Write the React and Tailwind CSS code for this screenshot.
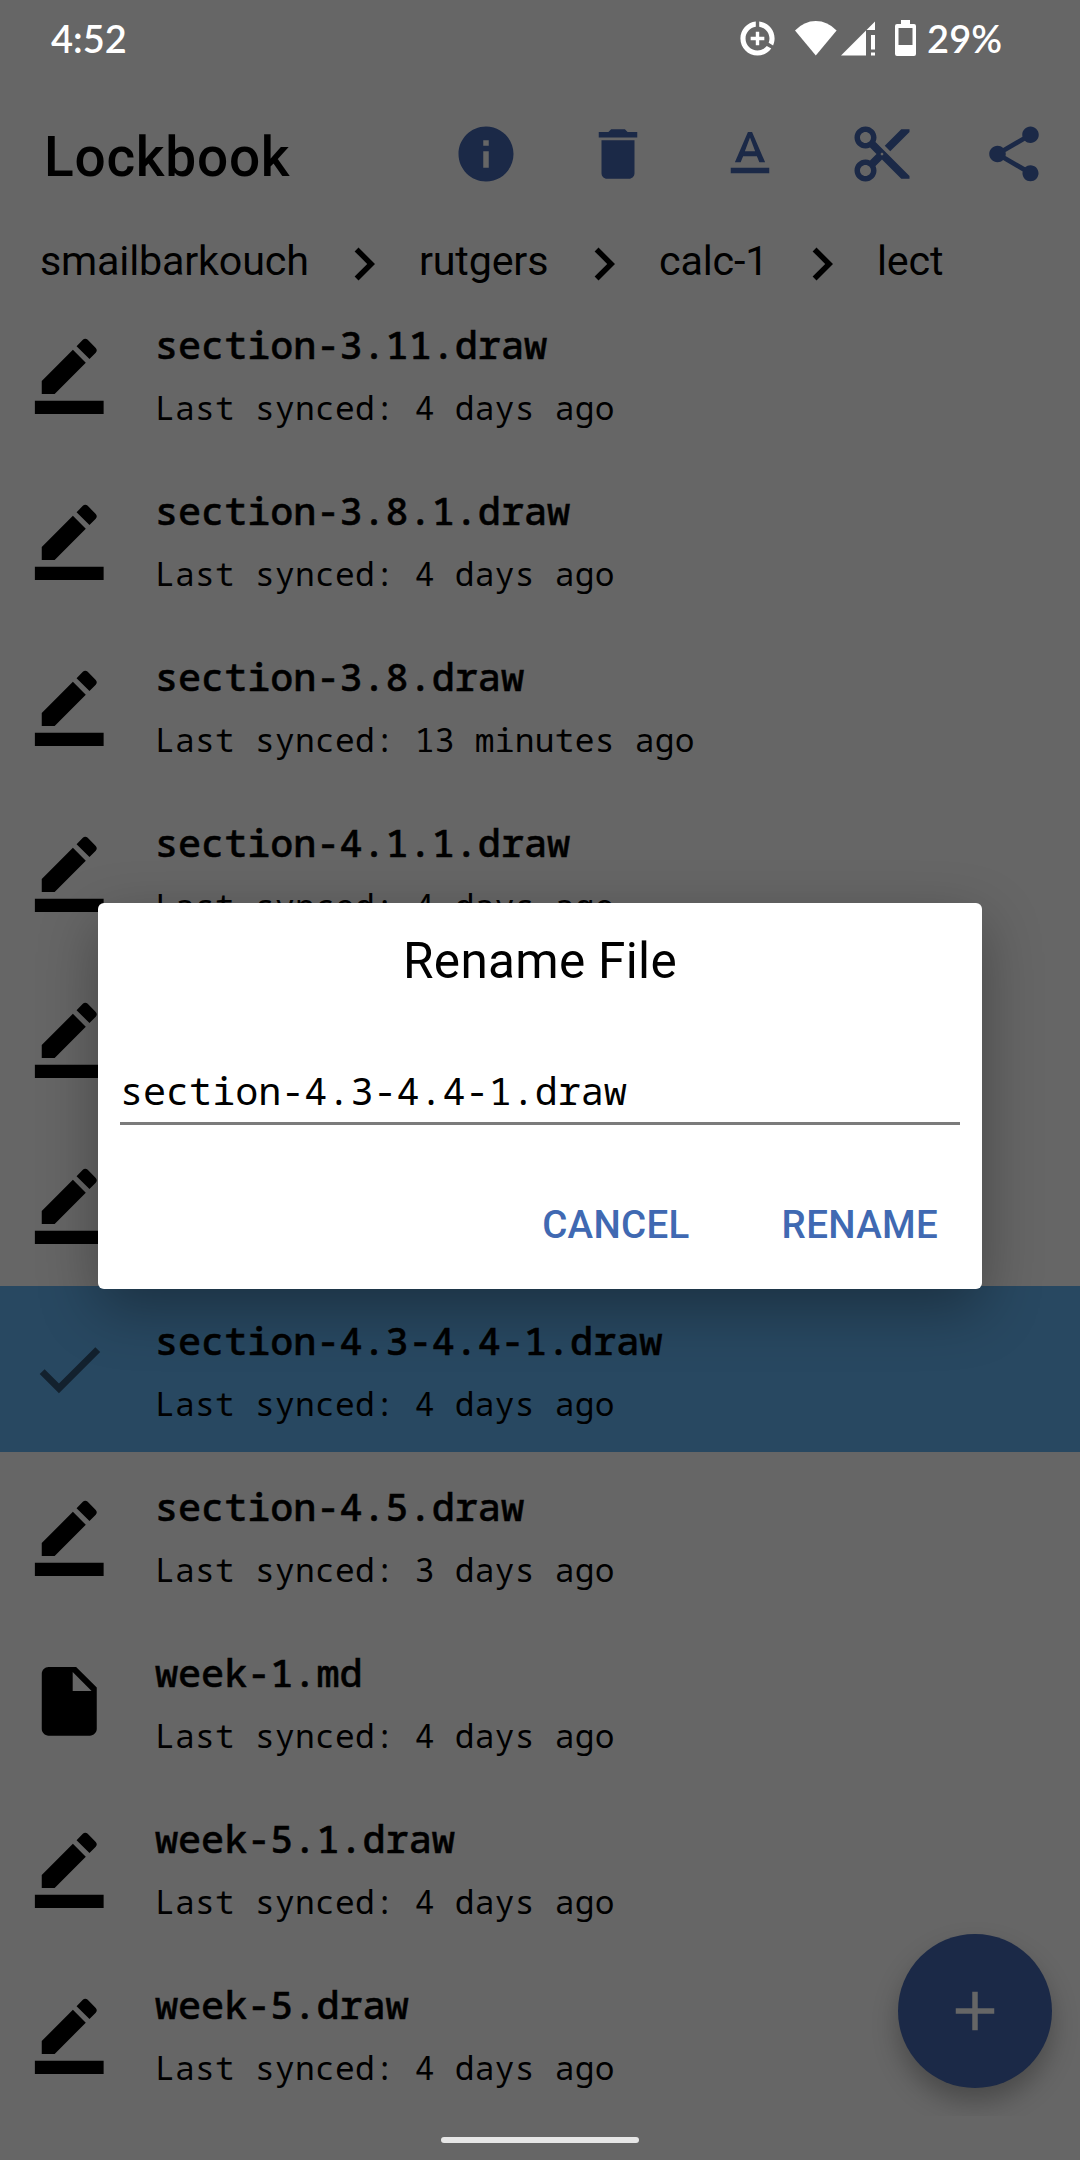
const ICONS = {
  info: "M12 2C6.48 2 2 6.48 2 12s4.48 10 10 10 10-4.48 10-10S17.52 2 12 2zm1 15h-2v-6h2v6zm0-8h-2V7h2v2z",
  trash: "M6 19c0 1.1.9 2 2 2h8c1.1 0 2-.9 2-2V7H6v12zM19 4h-3.5l-1-1h-5l-1 1H5v2h14V4z",
  format: "M5 17v2h14v-2H5zm4.5-4.2h5l.9 2.2h2.1L12.75 4h-1.5L6.5 15h2.1l.9-2.2zM12 5.98L13.87 11h-3.74L12 5.98z",
  cut: "M9.64 7.64c.23-.5.36-1.05.36-1.64 0-2.21-1.79-4-4-4S2 3.79 2 6s1.79 4 4 4c.59 0 1.14-.13 1.64-.36L10 12l-2.36 2.36C7.14 14.13 6.59 14 6 14c-2.21 0-4 1.79-4 4s1.79 4 4 4 4-1.79 4-4c0-.59-.13-1.14-.36-1.64L12 14l7 7h3v-1L9.64 7.64zM6 8c-1.1 0-2-.89-2-2s.9-2 2-2 2 .89 2 2-.9 2-2 2zm0 12c-1.1 0-2-.89-2-2s.9-2 2-2 2 .89 2 2-.9 2-2 2zm6-7.5c-.28 0-.5-.22-.5-.5s.22-.5.5-.5.5.22.5.5-.22.5-.5.5zM19 3l-6 6 2 2 7-7V3z",
  share: "M18 16.08c-.76 0-1.44.3-1.96.77L8.91 12.7c.05-.23.09-.46.09-.7s-.04-.47-.09-.7l7.05-4.11c.54.5 1.25.81 2.04.81 1.66 0 3-1.34 3-3s-1.34-3-3-3-3 1.34-3 3c0 .24.04.47.09.7L8.04 9.81C7.5 9.31 6.79 9 6 9c-1.66 0-3 1.34-3 3s1.34 3 3 3c.79 0 1.5-.31 2.04-.81l7.12 4.16c-.05.21-.08.43-.08.65 0 1.61 1.31 2.92 2.92 2.92 1.61 0 2.92-1.31 2.92-2.92s-1.31-2.92-2.92-2.92z",
  chevron: "M10 6L8.59 7.41 13.17 12l-4.58 4.59L10 18l6-6z",
  draw: "M22 24H2v-4h20v4zM13.06 5.19l3.75 3.75L7.75 18H4v-3.75l9.06-9.06zm4.82 2.68l-3.75-3.75 1.83-1.83c.39-.39 1.02-.39 1.41 0l2.34 2.34c.39.39.39 1.02 0 1.41l-1.83 1.83z",
  file: "M6 2c-1.1 0-1.99.9-1.99 2L4 20c0 1.1.89 2 1.99 2H18c1.1 0 2-.9 2-2V8l-6-6H6zm7 7V3.5L18.5 9H13z",
  check: "M9 16.17L4.83 12l-1.42 1.41L9 19 21 7l-1.41-1.41z",
  add: "M19 13h-6v6h-2v-6H5v-2h6V5h2v6h6v2z",
  saver: "M11 8v3H8v2h3v3h2v-3h3v-2h-3V8h-2zm2-5.95v3.03c3.39.49 6 3.39 6 6.92 0 .9-.18 1.75-.48 2.54l2.6 1.53c.56-1.24.88-2.62.88-4.07 0-5.18-3.95-9.45-9-9.95zM12 19c-3.87 0-7-3.13-7-7 0-3.53 2.61-6.43 6-6.92V2.05c-5.06.5-9 4.76-9 9.95 0 5.52 4.47 10 9.99 10 3.31 0 6.24-1.61 8.06-4.09l-2.6-1.53C16.17 17.98 14.21 19 12 19z",
};

function Icon({ name, className }) {
  return (
    <svg viewBox="0 0 24 24" fill="currentColor" className={`shrink-0 ${className}`}>
      <path d={ICONS[name]} />
    </svg>
  );
}

const FILES = [
  { name: "section-3.11.draw", synced: "4 days ago", icon: "draw" },
  { name: "section-3.8.1.draw", synced: "4 days ago", icon: "draw" },
  { name: "section-3.8.draw", synced: "13 minutes ago", icon: "draw" },
  { name: "section-4.1.1.draw", synced: "4 days ago", icon: "draw" },
  { icon: "draw" },
  { icon: "draw" },
  { name: "section-4.3-4.4-1.draw", synced: "4 days ago", icon: "check", selected: true },
  { name: "section-4.5.draw", synced: "3 days ago", icon: "draw" },
  { name: "week-1.md", synced: "4 days ago", icon: "file" },
  { name: "week-5.1.draw", synced: "4 days ago", icon: "draw" },
  { name: "week-5.draw", synced: "4 days ago", icon: "draw" },
];

function StatusBar() {
  return (
    <div className="flex h-[76px] items-center pl-[51px] pr-[78px] text-white">
      <span className="font-['Lato',sans-serif] text-[38px] leading-[46px] font-semibold">4:52</span>
      <div className="ml-auto flex items-center">
        <Icon name="saver" className="mr-[17px] size-[41px]" />
        <svg width="42" height="35" viewBox="0 0 42 35" fill="currentColor" className="mr-[4px]">
          <path d="M0 9.5Q9 0 20.8 0T41.6 9.5L20.8 34.5z" />
        </svg>
        <svg width="34" height="35" viewBox="0 0 34 35" fill="currentColor" className="mr-[20px]">
          <path d="M0 34.5L25 9.5V34.5zM25.5 9L34 0.5V9zM30 14h4v14.5h-4zM30 31.5h4v3h-4z" />
        </svg>
        <svg width="21" height="36" viewBox="0 0 21 36" fill="currentColor" className="mr-[11px]">
          <path fillRule="evenodd" d="M6 0h9v4h4q2 0 2 2v28q0 2-2 2H2q-2 0-2-2V6q0-2 2-2h4zM3.5 8v17h14V8z" />
        </svg>
        <span className="font-['Lato',sans-serif] text-[38px] leading-[46px] font-semibold">29%</span>
      </div>
    </div>
  );
}

function Header() {
  return (
    <header className="flex h-[156px] items-center pr-[33px] pl-[44px]">
      <h1 className="mt-[6px] text-[55px] leading-[66px] font-medium tracking-[0.75px]">Lockbook</h1>
      <div className="ml-auto flex gap-[66px] text-[#1b2947]">
        {["info", "trash", "format", "cut", "share"].map((name) => (
          <Icon key={name} name={name} className="size-[66px]" />
        ))}
      </div>
    </header>
  );
}

function Breadcrumb() {
  return (
    <nav className="flex h-[58px] items-center pl-[40px] text-[41.25px] leading-[50px] tracking-[-0.18px]">
      <span className="w-[291px]">smailbarkouch</span>
      <Icon name="chevron" className="mt-[5px] size-[66px]" />
      <span className="w-[174px] pl-[22px]">rutgers</span>
      <Icon name="chevron" className="mt-[5px] size-[66px]" />
      <span className="w-[152px] pl-[22px]">calc-1</span>
      <Icon name="chevron" className="mt-[5px] size-[66px]" />
      <span className="pl-[22px]">lect</span>
    </nav>
  );
}

function FileRow({ file }) {
  return (
    <li className={`flex h-[166px] pl-[28.4px] ${file.selected ? "bg-[#284861]" : ""}`}>
      <Icon name={file.icon} className={`mt-[41.5px] size-[82.5px] ${file.selected ? "text-[#13212e]" : ""}`} />
      {file.name && (
        <div className="pt-[28px] pl-[44.1px] font-['Noto_Sans_Mono','DejaVu_Sans_Mono',monospace] whitespace-pre">
          <div className="text-[38.5px] leading-[52px] font-medium tracking-[-0.04px] [-webkit-text-stroke:0.5px_black]">{file.name}</div>
          <div className="mt-[16px] text-[33px] leading-[44px] tracking-[0.19px]">Last synced: {file.synced}</div>
        </div>
      )}
    </li>
  );
}

function RenameDialog() {
  return (
    <div
      role="dialog"
      className="absolute top-[903px] left-[98px] flex h-[386px] w-[884px] flex-col rounded-[6px] bg-white px-[22px] shadow-[0_20px_60px_rgba(0,0,0,0.32)]"
    >
      <h2 className="mt-[28px] text-center text-[49.5px] leading-[60px] tracking-[0.3px]">Rename File</h2>
      <div className="mt-[71px] h-[63px] border-b-[3px] border-[#7b7b7b] font-['Noto_Sans_Mono','DejaVu_Sans_Mono',monospace] text-[38.5px] leading-[56px] tracking-[-0.06px]">
        section-4.3-4.4-1.draw
      </div>
      <div className="mt-[77px] flex justify-end gap-[92px] pr-[22px] text-[38.5px] leading-[46px] font-medium tracking-[0.3px] text-[#4069b2]">
        <button>CANCEL</button>
        <button>RENAME</button>
      </div>
    </div>
  );
}

export default function App() {
  return (
    <div className="relative h-[2160px] w-[1080px] overflow-hidden bg-[#666] font-['Roboto',sans-serif] text-black">
      <div className="relative h-[2116px] overflow-hidden">
        <StatusBar />
        <Header />
        <Breadcrumb />
        <ul>
          {FILES.map((file, i) => (
            <FileRow key={i} file={file} />
          ))}
        </ul>
        <button className="absolute top-[1934px] left-[898px] flex size-[154px] items-center justify-center rounded-full bg-[#1b2947] text-[#666] shadow-[0_14px_26px_rgba(0,0,0,0.28)]">
          <Icon name="add" className="size-[66px]" />
        </button>
      </div>
      <RenameDialog />
      <div className="absolute bottom-[17px] left-[441px] h-[6px] w-[198px] rounded-full bg-[#e6e6e6]" />
    </div>
  );
}
